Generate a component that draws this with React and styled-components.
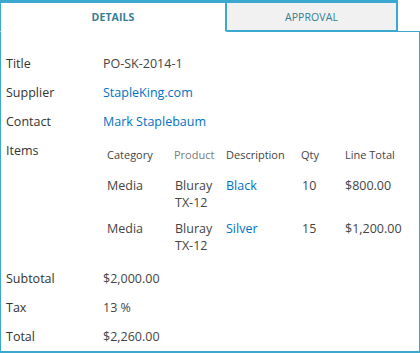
import React from "react";
import styled, { createGlobalStyle, css } from "styled-components";

const BLUE = "#3aa8cf";
const TEAL = "#357d92";
const TEXT = "#444444";
const LINK = "#0072c6";

const Global = createGlobalStyle`
  html, body { margin: 0; padding: 0; background: #ffffff; }
  body {
    font-family: "Open Sans", "Noto Sans", "Liberation Sans", sans-serif;
    color: ${TEXT};
    font-size: 12.5px;
  }
`;

const Frame = styled.div`
  width: 420px;
  height: 353px;
  display: flex;
  flex-direction: column;
`;

const TabBar = styled.div`
  display: flex;
  align-items: flex-start;
  position: relative;
  z-index: 1;
  margin-bottom: -1px;
`;

const Tab = styled.div`
  box-sizing: border-box;
  width: ${(p) => p.$w}px;
  border-top: 3px solid ${BLUE};
  border-right: 2px solid ${BLUE};
  display: flex;
  align-items: center;
  justify-content: center;
  font-size: 10.5px;
  letter-spacing: 0.1px;
  color: ${TEAL};
  ${(p) =>
    p.$active
      ? css`
          height: 32px;
          background: #ffffff;
          border-left: 1px solid ${BLUE};
          border-bottom: 1px solid #ffffff;
          font-weight: 700;
        `
      : css`
          height: 31px;
          background: #f1f1f1;
          border-bottom: 1px solid ${BLUE};
        `}
`;

const Panel = styled.div`
  flex: 1;
  box-sizing: border-box;
  border: 1px solid ${BLUE};
  border-bottom-width: 2px;
  padding: 17px 0 0 5px;
`;

const Field = styled.div`
  display: grid;
  grid-template-columns: 97px 1fr;
  align-items: start;
  line-height: 29px;
`;

const Label = styled.div`
  color: #333333;
`;

const Value = styled.div`
  color: ${TEXT};
`;

const Link = styled.a`
  color: ${LINK};
  text-decoration: none;
`;

const Items = styled.div`
  display: grid;
  grid-template-columns: 67px 52px 75px 44px auto;
  line-height: 17px;
  margin: 0 0 6px 4px;
`;

const HeadCell = styled.div`
  padding: 10px 0 9px;
  font-size: 11px;
  color: ${(p) => (p.$muted ? "#7a7a7a" : "#444444")};
`;

const Cell = styled.div`
  padding: 5px 0 4px;
  color: ${TEXT};
  ${(p) => p.$indent && css`padding-left: 1px;`}
`;

const CellLink = styled(Cell)`
  color: ${LINK};
`;

const rows = [
  { category: "Media", product: ["Bluray", "TX-12"], desc: "Black", qty: "10", total: "$800.00" },
  { category: "Media", product: ["Bluray", "TX-12"], desc: "Silver", qty: "15", total: "$1,200.00" },
];

export default function App() {
  return (
    <>
      <Global />
      <Frame>
        <TabBar>
          <Tab $w={227} $active>DETAILS</Tab>
          <Tab $w={171}>APPROVAL</Tab>
        </TabBar>
        <Panel>
          <Field>
            <Label>Title</Label>
            <Value>PO-SK-2014-1</Value>
          </Field>
          <Field>
            <Label>Supplier</Label>
            <Value><Link href="#">StapleKing.com</Link></Value>
          </Field>
          <Field>
            <Label>Contact</Label>
            <Value><Link href="#">Mark Staplebaum</Link></Value>
          </Field>
          <Field>
            <Label>Items</Label>
            <Items>
              <HeadCell>Category</HeadCell>
              <HeadCell $muted>Product</HeadCell>
              <HeadCell>Description</HeadCell>
              <HeadCell>Qty</HeadCell>
              <HeadCell>Line Total</HeadCell>
              {rows.map((r, i) => (
                <React.Fragment key={i}>
                  <Cell>{r.category}</Cell>
                  <Cell $indent>
                    {r.product[0]}
                    <br />
                    {r.product[1]}
                  </Cell>
                  <CellLink>{r.desc}</CellLink>
                  <Cell $indent>{r.qty}</Cell>
                  <Cell>{r.total}</Cell>
                </React.Fragment>
              ))}
            </Items>
          </Field>
          <Field>
            <Label>Subtotal</Label>
            <Value>$2,000.00</Value>
          </Field>
          <Field>
            <Label>Tax</Label>
            <Value>13 %</Value>
          </Field>
          <Field>
            <Label>Total</Label>
            <Value>$2,260.00</Value>
          </Field>
        </Panel>
      </Frame>
    </>
  );
}
